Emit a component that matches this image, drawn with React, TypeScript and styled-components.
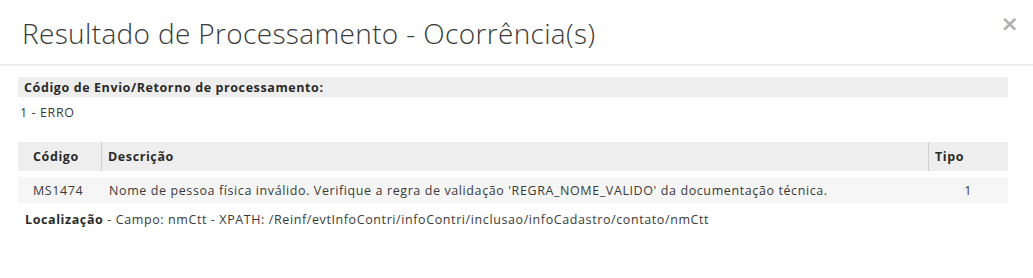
import { createGlobalStyle } from 'styled-components';
import styled from 'styled-components';

const GlobalStyle = createGlobalStyle`
  body {
    margin: 0;
    background: #ffffff;
    font-family: 'Open Sans', 'Liberation Sans', sans-serif;
    color: #333;
  }
`;

const Modal = styled.div`
  width: 1033px;
  height: 278px;
  background: #fff;
  overflow: hidden;
`;

const Header = styled.div`
  display: flex;
  align-items: flex-start;
  justify-content: space-between;
  height: 66px;
  padding: 0 14px 0 22px;
  box-sizing: border-box;
  border-bottom: 2px solid #ececec;
`;

const Title = styled.h4`
  margin: 16px 0 0;
  font-size: 28px;
  font-weight: 300;
  color: #3a3a3a;
  line-height: 34px;
  letter-spacing: 0.35px;
`;

const Close = styled.button`
  margin-top: 13px;
  border: none;
  background: none;
  padding: 0;
  font-size: 22px;
  font-weight: 700;
  line-height: 22px;
  color: #b0b0b0;
  cursor: pointer;
  font-family: 'DejaVu Sans', sans-serif;
`;

const Body = styled.div`
  padding: 11px 25px 0 18px;
  font-size: 12.5px;
  letter-spacing: 0.6px;
`;

const SectionBar = styled.div`
  background: #eeeeee;
  height: 20px;
  padding-left: 6px;
  font-weight: 700;
  line-height: 21px;
  color: #2a2a2a;
`;

const Plain = styled.div`
  line-height: 21px;
  margin-top: 5px;
  padding-left: 2px;
  color: #3a3a3a;
`;

const Table = styled.table`
  width: 100%;
  margin-top: 19px;
  border-collapse: separate;
  border-spacing: 0 6px;
  margin-bottom: -6px;
  position: relative;
  top: -6px;
  font-size: inherit;
  letter-spacing: inherit;
`;

const Th = styled.th<{ $w?: number; $divider?: boolean }>`
  width: ${(p) => (p.$w ? `${p.$w}px` : 'auto')};
  height: 29px;
  padding: 0 0 0 ${(p) => (p.$divider ? 6 : 15)}px;
  background: #eeeeee;
  text-align: left;
  font-weight: 700;
  color: #2a2a2a;
  border-left: ${(p) => (p.$divider ? '1px solid #cfcfcf' : 'none')};
  box-sizing: border-box;
`;

const Td = styled.td<{ $center?: boolean; $pad?: number }>`
  height: 26px;
  padding: 0 0 0 ${(p) => p.$pad ?? 0}px;
  background: #f6f6f6;
  color: #3a3a3a;
  text-align: ${(p) => (p.$center ? 'center' : 'left')};
  box-sizing: border-box;
`;

const Location = styled.div`
  line-height: 20px;
  margin-top: 1px;
  padding-left: 7px;
  color: #3a3a3a;

  b {
    font-weight: 700;
    color: #2a2a2a;
  }
`;

export default function App() {
  return (
    <>
      <GlobalStyle />
      <Modal>
        <Header>
          <Title>Resultado de Processamento - Ocorrência(s)</Title>
          <Close aria-label="Fechar">×</Close>
        </Header>
        <Body>
          <SectionBar>Código de Envio/Retorno de processamento:</SectionBar>
          <Plain>1 - ERRO</Plain>
          <Table>
            <thead>
              <tr>
                <Th $w={83}>Código</Th>
                <Th $divider>Descrição</Th>
                <Th $w={80} $divider>Tipo</Th>
              </tr>
            </thead>
            <tbody>
              <tr>
                <Td $pad={15}>MS1474</Td>
                <Td $pad={8}>
                  Nome de pessoa física inválido. Verifique a regra de validação 'REGRA_NOME_VALIDO' da documentação técnica.
                </Td>
                <Td $center>1</Td>
              </tr>
            </tbody>
          </Table>
          <Location>
            <b>Localização</b> - Campo: nmCtt - XPATH: /Reinf/evtInfoContri/infoContri/inclusao/infoCadastro/contato/nmCtt
          </Location>
        </Body>
      </Modal>
    </>
  );
}
